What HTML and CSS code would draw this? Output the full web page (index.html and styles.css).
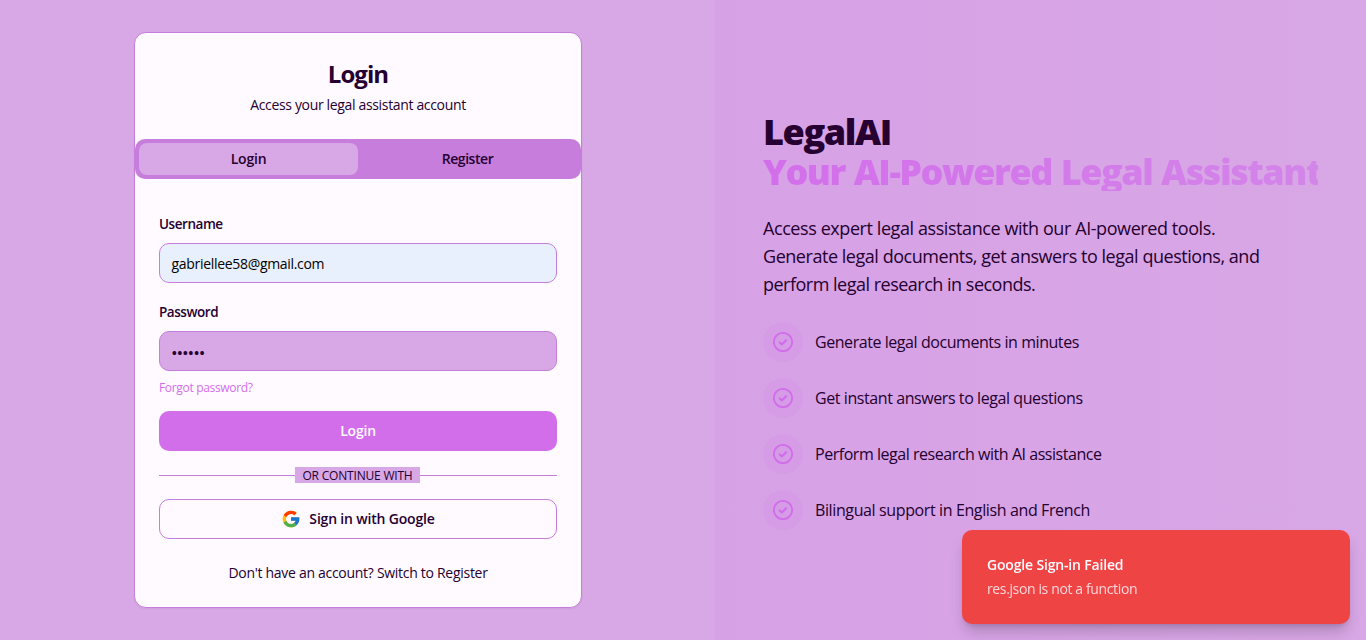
FILE: index.html
```
<!DOCTYPE html>
<html lang="en">
<head>
<meta charset="utf-8">
<title>LegalAI - Login</title>
<link rel="stylesheet" href="styles.css">
</head>
<body>
<main class="page">
  <section class="auth">
    <div class="card">
      <header class="card-header">
        <h2 class="card-title"><span class="t-title">Login</span></h2>
        <p class="card-desc"><span class="t-desc">Access your legal assistant account</span></p>
      </header>
      <div class="tabs">
        <button class="tab active"><span class="t-tab1">Login</span></button>
        <button class="tab"><span class="t-tab2">Register</span></button>
      </div>
      <div class="card-body">
        <label class="label"><span class="t-user">Username</span></label>
        <div class="field filled"><span class="t-mail">gabriellee58@gmail.com</span></div>
        <label class="label second"><span class="t-pass">Password</span></label>
        <div class="field"><span class="t-dots">••••••</span></div>
        <a class="forgot"><span class="t-forgot">Forgot password?</span></a>
        <button class="submit"><span class="t-submit">Login</span></button>
        <div class="divider"><span class="divider-label"><span class="t-or">OR CONTINUE WITH</span></span></div>
        <button class="google">
          <svg class="google-icon" viewBox="0 0 48 48">
            <path fill="#FFC107" d="M43.611 20.083H42V20H24v8h11.303c-1.649 4.657-6.08 8-11.303 8-6.627 0-12-5.373-12-12s5.373-12 12-12c3.059 0 5.842 1.154 7.961 3.039l5.657-5.657C34.046 6.053 29.268 4 24 4 12.955 4 4 12.955 4 24s8.955 20 20 20 20-8.955 20-20c0-1.341-.138-2.65-.389-3.917z"/>
            <path fill="#FF3D00" d="M6.306 14.691l6.571 4.819C14.655 15.108 18.961 12 24 12c3.059 0 5.842 1.154 7.961 3.039l5.657-5.657C34.046 6.053 29.268 4 24 4 16.318 4 9.656 8.337 6.306 14.691z"/>
            <path fill="#4CAF50" d="M24 44c5.166 0 9.86-1.977 13.409-5.192l-6.19-5.238A11.91 11.91 0 0 1 24 36c-5.202 0-9.619-3.317-11.283-7.946l-6.522 5.025C9.505 39.556 16.227 44 24 44z"/>
            <path fill="#1976D2" d="M43.611 20.083H42V20H24v8h11.303a12.04 12.04 0 0 1-4.087 5.571l6.193 5.238C36.971 39.205 44 34 44 24c0-1.341-.138-2.65-.389-3.917z"/>
          </svg>
          <span class="t-google">Sign in with Google</span>
        </button>
        <p class="switch"><span class="t-switch">Don't have an account? Switch to Register</span></p>
      </div>
    </div>
  </section>
  <section class="hero">
    <h1 class="headline"><span class="t-brand">LegalAI</span><span class="tagline">Your AI-Powered Legal Assistant</span></h1>
    <p class="lead"><span class="t-l1">Access expert legal assistance with our AI-powered tools.</span><br><span class="t-l2">Generate legal documents, get answers to legal questions, and</span><br><span class="t-l3">perform legal research in seconds.</span></p>
    <ul class="features">
      <li class="feature"><span class="badge"><svg class="check" viewBox="0 0 24 24"><circle cx="12" cy="12" r="11"/><path d="m8.2 12.5 2.5 2.4 5.1-5"/></svg></span><span class="t-f1">Generate legal documents in minutes</span></li>
      <li class="feature"><span class="badge"><svg class="check" viewBox="0 0 24 24"><circle cx="12" cy="12" r="11"/><path d="m8.2 12.5 2.5 2.4 5.1-5"/></svg></span><span class="t-f2">Get instant answers to legal questions</span></li>
      <li class="feature"><span class="badge"><svg class="check" viewBox="0 0 24 24"><circle cx="12" cy="12" r="11"/><path d="m8.2 12.5 2.5 2.4 5.1-5"/></svg></span><span class="t-f3">Perform legal research with AI assistance</span></li>
      <li class="feature"><span class="badge"><svg class="check" viewBox="0 0 24 24"><circle cx="12" cy="12" r="11"/><path d="m8.2 12.5 2.5 2.4 5.1-5"/></svg></span><span class="t-f4">Bilingual support in English and French</span></li>
    </ul>
  </section>
</main>
<aside class="toast">
  <p class="toast-title"><span class="t-tt">Google Sign-in Failed</span></p>
  <p class="toast-text"><span class="t-td">res.json is not a function</span></p>
</aside>
</body>
</html>
```
FILE: styles.css
```
* { box-sizing: border-box; }
body { margin: 0; background: #d8a7e5; color: #250030; font: 14px/20px "Open Sans", "Noto Sans", sans-serif; overflow: hidden; }
h1, h2, p, ul { margin: 0; padding: 0; }
button { font: inherit; color: inherit; border: 0; padding: 0; background: none; }
span { white-space: nowrap; }
.page { display: grid; grid-template-columns: 715px 1fr; height: 640px; }
.auth { display: flex; align-items: center; justify-content: center; padding-left: 1px; }
.card { width: 448px; height: 576px; border: 1px solid #c77ddb; border-radius: 12px; background: #fffaff; box-shadow: 0 1px 2px rgba(0, 0, 0, .05); }
.card-header { padding: 23px 24px 24px; height: 106px; text-align: center; }
.card-title { font-size: 24px; font-weight: 700; line-height: 36px; }
.card-desc { margin-top: 3px; }
.tabs { display: grid; grid-template-columns: 1fr 1fr; height: 40px; padding: 4px; border-radius: 10px; background: #c77ddb; }
.tab { border-radius: 8px; font-weight: 600; }
.tab.active { background: #d8a7e5; }
.card-body { display: flex; flex-direction: column; padding: 35px 24px 0; }
.label { font-size: 13.5px; font-weight: 600; margin-bottom: 9px; }
.label.second { margin-top: 19px; }
.field { display: flex; align-items: center; height: 40px; padding: 2px 12px 0 11.5px; border: 1px solid #c77ddb; border-radius: 10px; background: #d8a7e5; }
.filled { background: #e8f0fe; color: #000; }
.forgot { margin-top: 9px; font-size: 12px; line-height: 16px; color: #d36eeb; }
.submit { margin-top: 15px; height: 40px; border-radius: 10px; background: #d36eeb; color: #fffaff; font-weight: 600; }
.divider { display: flex; align-items: center; height: 16px; margin: 16px 0; font-size: 12px; line-height: 16px; }
.divider::before, .divider::after { content: ""; height: 1px; background: #c77ddb; }
.divider::before { width: 136px; }
.divider::after { flex: 1; }
.divider-label { width: 125px; height: 16px; line-height: 17px; text-align: center; background: #d8a7e5; }
.google { display: flex; align-items: center; justify-content: center; gap: 8px; height: 40px; border: 1px solid #c77ddb; border-radius: 10px; font-weight: 600; }
.google-icon { width: 20px; height: 20px; }
.switch { margin-top: 24px; text-align: center; }
.hero { display: flex; flex-direction: column; padding: 112px 48px 0; background: linear-gradient(90deg, #d7a1e6, #d8a7e5); }
.headline { font-size: 36px; line-height: 40px; font-weight: 800; height: 80px; letter-spacing: -1.4px; }
.headline > span { display: block; }
.tagline { width: 555px; height: 39px; letter-spacing: -1.5px; word-spacing: 1px; color: transparent; background: linear-gradient(90deg, #d36eeb, #d385e9); background-clip: text; -webkit-background-clip: text; }
.lead { margin-top: 22px; font-size: 18px; line-height: 28px; }
.features { display: flex; flex-direction: column; gap: 16px; margin-top: 24px; list-style: none; font-size: 16px; line-height: 24px; }
.feature { display: flex; align-items: center; gap: 12px; height: 40px; }
.badge { display: flex; align-items: center; justify-content: center; width: 40px; height: 40px; border-radius: 50%; background: rgba(209, 109, 235, .1); }
.check { width: 20px; height: 20px; fill: none; stroke: #d16deb; stroke-width: 2.2; stroke-linecap: round; stroke-linejoin: round; }
.check path { stroke-width: 2.6; }
.toast { position: fixed; right: 16px; bottom: 16px; width: 388px; height: 94px; padding: 25px; border-radius: 10px; background: #ef4444; color: #fffaff; box-shadow: 0 10px 15px -3px rgba(0, 0, 0, .2), 0 4px 6px -4px rgba(0, 0, 0, .2); }
.toast-title { font-weight: 600; }
.toast-text { margin-top: 4px; opacity: .8; }

/* Per-string tracking */
.t-title { letter-spacing: -.95px; }
.t-desc { letter-spacing: -.34px; }
.t-tab1, .t-submit { letter-spacing: -.2px; }
.t-tab2 { letter-spacing: -.45px; }
.t-user, .t-pass { letter-spacing: -.45px; }
.t-mail { letter-spacing: -.31px; }
.t-dots { font-size: 15px; font-weight: 600; letter-spacing: -.1px; }
.t-forgot { letter-spacing: -.32px; }
.t-or { letter-spacing: -.2px; }
.t-google { letter-spacing: -.18px; }
.t-switch { letter-spacing: -.29px; }
.t-l1 { letter-spacing: -.42px; }
.t-l2 { letter-spacing: -.46px; }
.t-l3 { letter-spacing: -.5px; }
.t-f1 { letter-spacing: -.44px; }
.t-f2 { letter-spacing: -.42px; }
.t-f3 { letter-spacing: -.46px; }
.t-f4 { letter-spacing: -.38px; }
.t-tt { letter-spacing: -.17px; }
.t-td { letter-spacing: -.37px; }
```
